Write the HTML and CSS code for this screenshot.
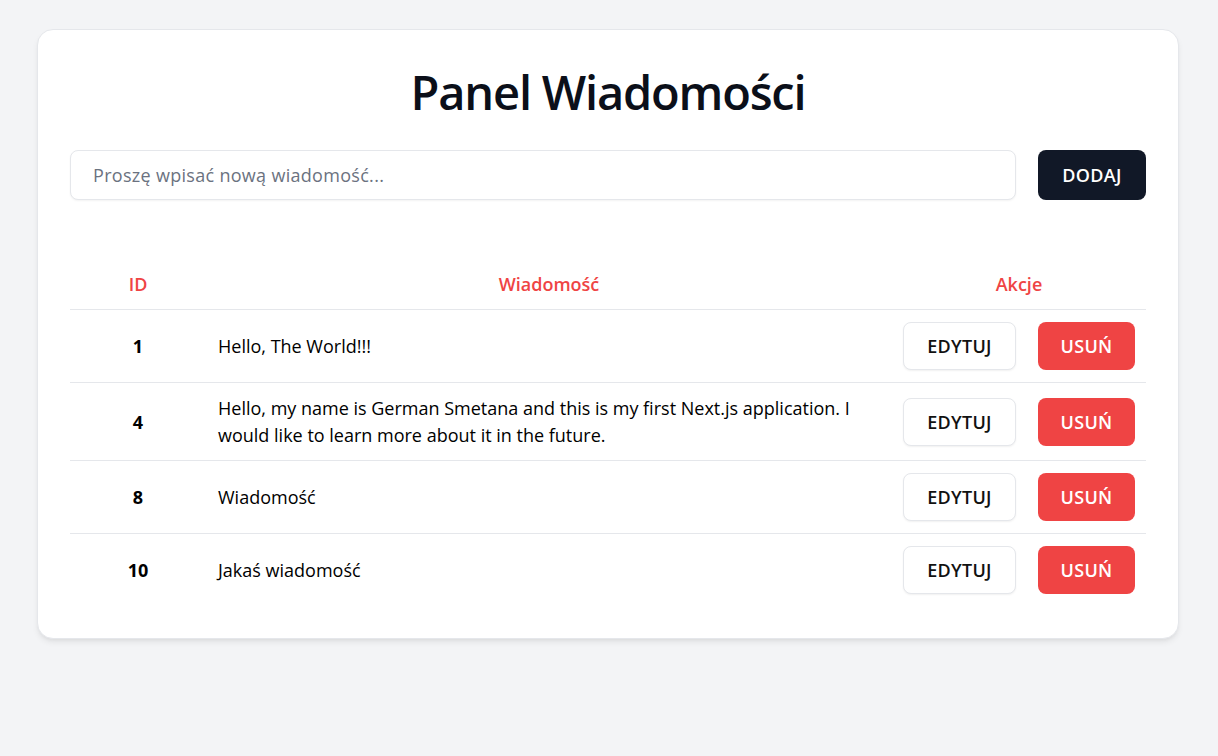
FILE: index.html
```html
<!DOCTYPE html>
<html lang="pl">
<head>
<meta charset="utf-8">
<title>Panel Wiadomości</title>
<link rel="stylesheet" href="styles.css">
</head>
<body>
<main class="page">
  <section class="card">
    <h1 class="title">Panel Wiadomości</h1>
    <form class="add-form">
      <input class="add-input" type="text" placeholder="Proszę wpisać nową wiadomość...">
      <button class="btn btn-dark" type="button">DODAJ</button>
    </form>
    <table class="msg-table">
      <thead>
        <tr>
          <th class="col-id">ID</th>
          <th class="col-msg">Wiadomość</th>
          <th class="col-act">Akcje</th>
        </tr>
      </thead>
      <tbody>
        <tr>
          <td class="cell-id">1</td>
          <td class="cell-msg">Hello, The World!!!</td>
          <td class="cell-act"><div class="actions"><button class="btn btn-light" type="button">EDYTUJ</button><button class="btn btn-red" type="button">USUŃ</button></div></td>
        </tr>
        <tr>
          <td class="cell-id">4</td>
          <td class="cell-msg">Hello, my name is German Smetana and this is my first Next.js application. I would like to learn more about it in the future.</td>
          <td class="cell-act"><div class="actions"><button class="btn btn-light" type="button">EDYTUJ</button><button class="btn btn-red" type="button">USUŃ</button></div></td>
        </tr>
        <tr>
          <td class="cell-id">8</td>
          <td class="cell-msg">Wiadomość</td>
          <td class="cell-act"><div class="actions"><button class="btn btn-light" type="button">EDYTUJ</button><button class="btn btn-red" type="button">USUŃ</button></div></td>
        </tr>
        <tr>
          <td class="cell-id">10</td>
          <td class="cell-msg">Jakaś wiadomość</td>
          <td class="cell-act"><div class="actions"><button class="btn btn-light" type="button">EDYTUJ</button><button class="btn btn-red" type="button">USUŃ</button></div></td>
        </tr>
      </tbody>
    </table>
  </section>
</main>
</body>
</html>
```

FILE: styles.css
```css
* { box-sizing: border-box; }

html, body {
  margin: 0;
  padding: 0;
  background: #f3f4f6;
  font-family: "Open Sans", "Noto Sans", "Liberation Sans", sans-serif;
  color: #111827;
}

.page {
  padding: 29px 39px 29px 37px;
}

.card {
  background: #ffffff;
  border: 1px solid #e5e7eb;
  border-radius: 16px;
  box-shadow: 0 4px 6px -1px rgba(0,0,0,0.08), 0 2px 4px -2px rgba(0,0,0,0.06);
  padding: 32px 32px 32px;
}

.title {
  margin: 0 0 28px;
  text-align: center;
  font-size: 47px;
  line-height: 60px;
  font-weight: 600;
  color: #0b0f19;
  letter-spacing: -1.2px;
}

.add-form {
  display: flex;
  gap: 22px;
  margin: 0 0 59px;
}

.add-input {
  flex: 1;
  height: 50px;
  border: 1px solid #e5e7eb;
  border-radius: 8px;
  padding: 0 22px;
  font-family: inherit;
  font-size: 18px;
  letter-spacing: 0.3px;
  color: #111827;
  box-shadow: 0 1px 2px rgba(0,0,0,0.05);
  outline: none;
}

.add-input::placeholder {
  color: #6b7280;
}

.btn {
  height: 48px;
  border-radius: 8px;
  font-family: inherit;
  font-size: 18px;
  font-weight: 600;
  padding: 0;
  cursor: pointer;
  border: 1px solid transparent;
  letter-spacing: 0.3px;
}

.btn-dark {
  width: 108px;
  height: 50px;
  background: #111827;
  color: #ffffff;
}

.btn-light {
  width: 113px;
  background: #ffffff;
  color: #111111;
  border-color: #e5e7eb;
  box-shadow: 0 1px 2px rgba(0,0,0,0.06);
}

.btn-red {
  width: 97px;
  background: #ef4444;
  color: #ffffff;
}

.msg-table {
  width: 100%;
  border-collapse: collapse;
  font-size: 18px;
  line-height: 26.4px;
}

.msg-table th {
  color: #ef4444;
  font-weight: 600;
  padding: 12px;
  border-bottom: 1px solid #e5e7eb;
  text-align: center;
}

.msg-table td {
  padding: 12px;
  color: #000000;
}

.msg-table tbody tr + tr td {
  border-top: 1px solid #e5e7eb;
}

.col-id { width: 136px; }
.col-act { width: 254px; }

.cell-id {
  text-align: center;
  font-weight: 700;
}

.cell-msg {
  text-align: left;
}

.msg-table .cell-act {
  padding: 12px 11px;
}

.actions {
  display: flex;
  gap: 22px;
}
```
